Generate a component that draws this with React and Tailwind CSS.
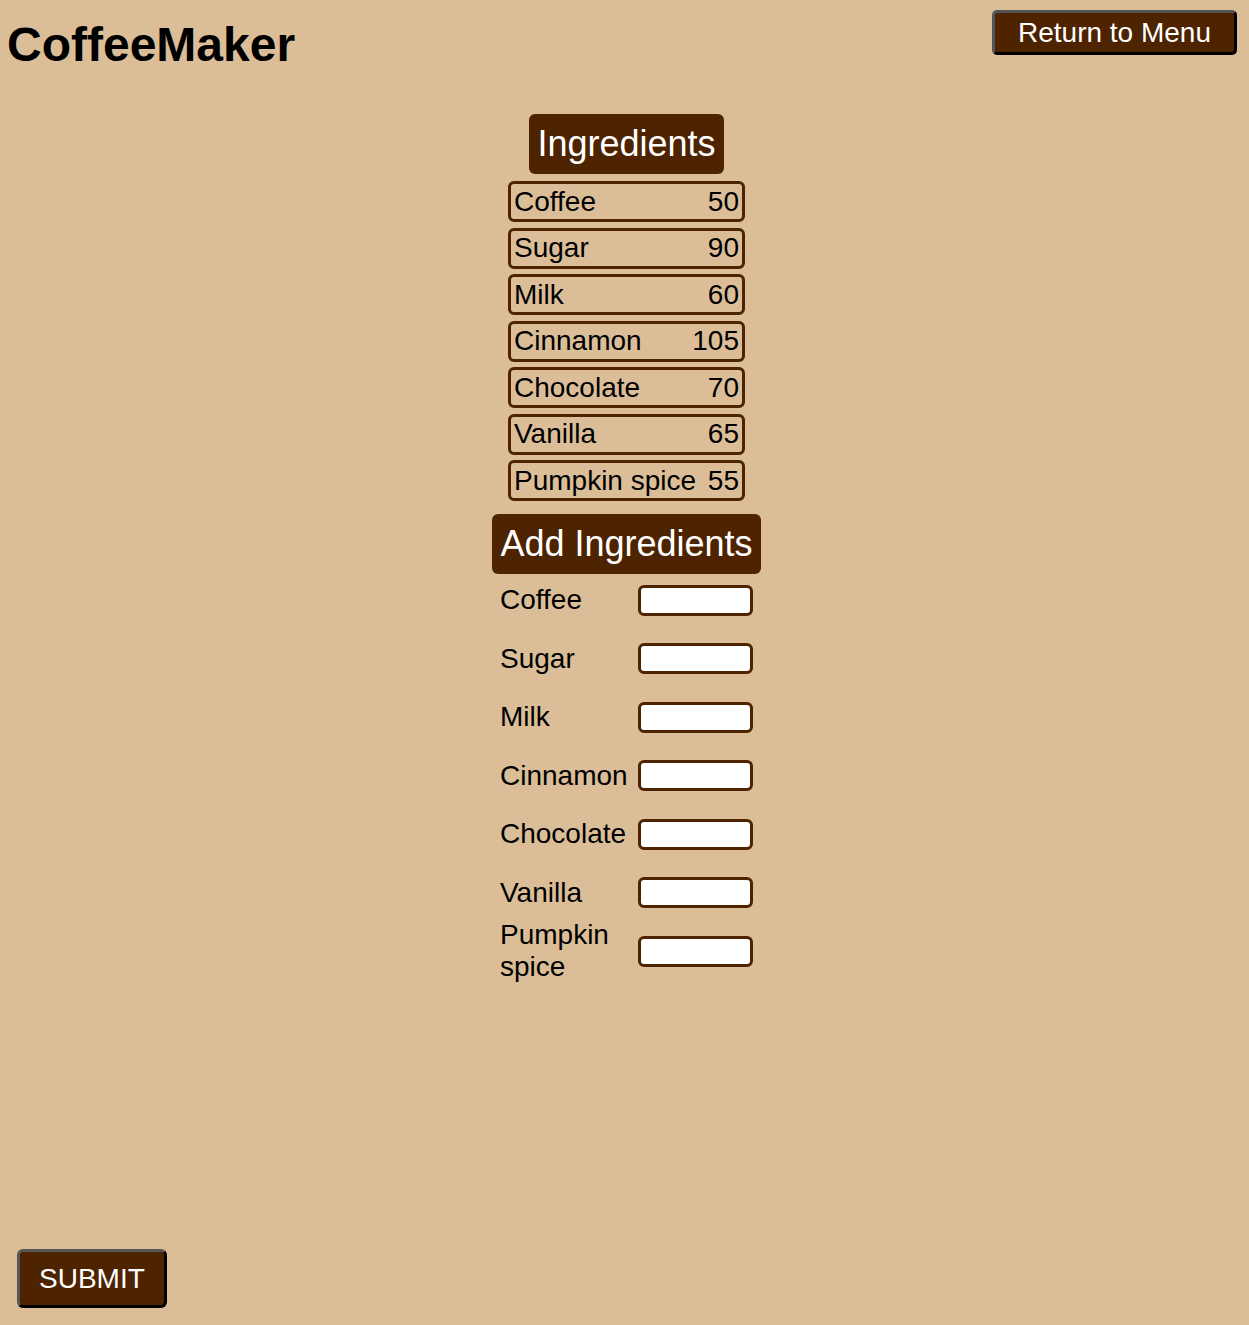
import React from 'react';

const stock = [
  { name: 'Coffee', amount: 50 },
  { name: 'Sugar', amount: 90 },
  { name: 'Milk', amount: 60 },
  { name: 'Cinnamon', amount: 105 },
  { name: 'Chocolate', amount: 70 },
  { name: 'Vanilla', amount: 65 },
  { name: 'Pumpkin spice', amount: 55 },
];

const App = () => {
  return (
    <div className="min-h-screen flex flex-col bg-[#dbbe98] text-black font-['Liberation_Sans',Arial,sans-serif]">
      <div className="flex justify-between items-start">
        <h1 className="pl-[7px] pt-[17px] text-[48px] leading-[55px] font-bold">CoffeeMaker</h1>
        <button className="mt-[10px] mr-[12px] h-[45px] px-[23px] rounded-[5px] border-[3px] border-t-[#555] border-l-[#555] border-r-black border-b-black bg-[#4d2300] text-white text-[28px] leading-[32px]">
          Return to Menu
        </button>
      </div>

      <div className="flex flex-col items-center pl-[4px] mt-[42px]">
        <h2 className="h-[60px] flex items-center px-[8px] rounded-[6px] bg-[#4d2300] text-white text-[36px]">
          Ingredients
        </h2>
        <div className="flex flex-col gap-[5.5px] mt-[7px]">
          {stock.map((item) => (
            <div
              key={item.name}
              className="w-[237px] h-[41px] flex justify-between items-center px-[3px] border-[3px] border-[#4d2300] rounded-[6px] text-[28px] leading-[32px]"
            >
              <span>{item.name}</span>
              <span>{item.amount}</span>
            </div>
          ))}
        </div>

        <h2 className="mt-[13px] h-[60px] flex items-center px-[8px] rounded-[6px] bg-[#4d2300] text-white text-[36px]">
          Add Ingredients
        </h2>
        <div className="flex flex-col -mt-[3px]">
          {stock.map((item) => (
            <div key={item.name} className="h-[58.5px] w-[253px] flex items-center justify-between">
              <label className="w-[132px] text-[28px] leading-[32px]">{item.name}</label>
              <input
                type="text"
                className="w-[115px] h-[31px] bg-white border-[3px] border-[#4d2300] rounded-[6px] outline-none"
              />
            </div>
          ))}
        </div>
      </div>

      <div className="mt-auto pl-[17px] pb-[17px]">
        <button className="h-[59px] px-[19px] rounded-[6px] border-[3px] border-t-[#555] border-l-[#555] border-r-black border-b-black bg-[#4d2300] text-white text-[28px] leading-[32px]">
          SUBMIT
        </button>
      </div>
    </div>
  );
};

export default App;
